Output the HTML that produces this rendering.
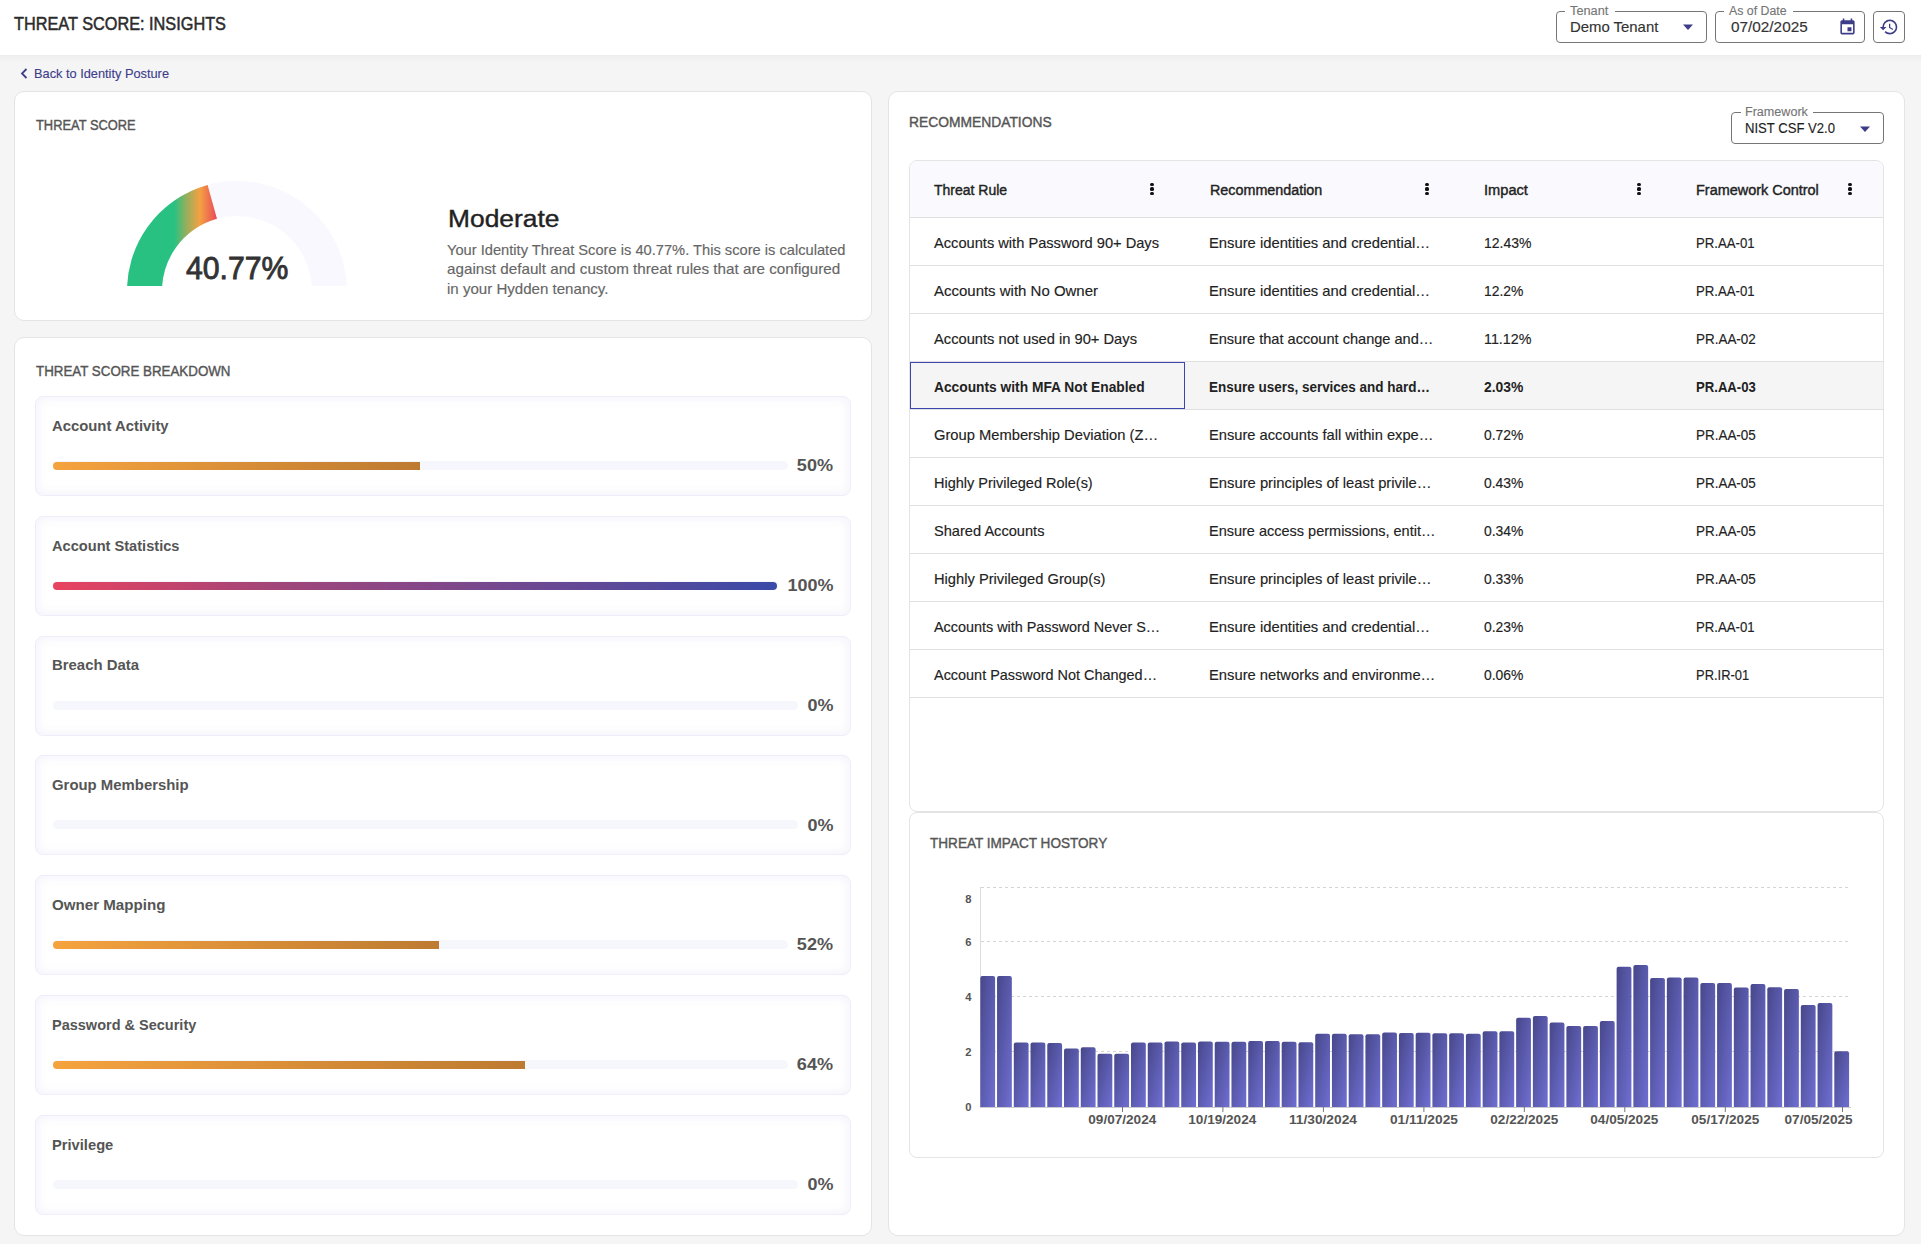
<!DOCTYPE html>
<html><head><meta charset="utf-8"><title>Threat Score: Insights</title>
<style>
html,body{margin:0;padding:0}
body{width:1921px;height:1244px;position:relative;overflow:hidden;background:#f5f5f5;font-family:"Liberation Sans",sans-serif}
.t{position:absolute;white-space:nowrap;display:block}
</style></head><body>
<div style="position:absolute;left:-20px;top:0;width:1961px;height:55px;background:#fff;box-shadow:0 1px 8px rgba(0,0,0,0.06)"></div>
<div style="position:absolute;left:1556px;top:11px;width:151px;height:32px;box-sizing:border-box;border:1px solid #767676;border-radius:4px"></div>
<div style="position:absolute;left:1565px;top:9px;width:50px;height:4px;background:#fff"></div>
<div style="position:absolute;left:1715px;top:11px;width:150px;height:32px;box-sizing:border-box;border:1px solid #767676;border-radius:4px"></div>
<div style="position:absolute;left:1724px;top:9px;width:69px;height:4px;background:#fff"></div>
<div style="position:absolute;left:1873px;top:11px;width:32px;height:32px;box-sizing:border-box;border:1px solid #767676;border-radius:4px"></div>
<svg style="position:absolute;left:1682px;top:23px" width="12" height="8"><path d="M1 1.5 L11 1.5 L6 7 Z" fill="#3c3c89"/></svg>
<svg style="position:absolute;left:1838px;top:16.5px" width="19" height="19" viewBox="0 0 24 24"><path fill="#3c3c89" d="M19 4h-1V2h-2v2H8V2H6v2H5c-1.11 0-1.99.9-1.99 2L3 20a2 2 0 002 2h14c1.1 0 2-.9 2-2V6c0-1.1-.9-2-2-2zm0 16H5V9h14v11zM12 13h5v5h-5z"/></svg>
<svg style="position:absolute;left:1879px;top:17px" width="20" height="20" viewBox="0 0 24 24"><path fill="#3c3c89" d="M13 3a9 9 0 00-9 9H1l3.89 3.89.07.14L9 12H6c0-3.87 3.13-7 7-7s7 3.13 7 7-3.13 7-7 7c-1.93 0-3.68-.79-4.94-2.06l-1.42 1.42A8.954 8.954 0 0013 21a9 9 0 000-18zm-1 5v5l4.28 2.54.72-1.21-3.5-2.08V8H12z"/></svg>
<svg style="position:absolute;left:19px;top:67px" width="10" height="13"><path d="M7.5 2 L3 6.5 L7.5 11" stroke="#3e3e8c" stroke-width="1.8" fill="none"/></svg>
<div style="position:absolute;left:14px;top:91px;width:858px;height:230px;box-sizing:border-box;background:#fff;border:1px solid #e4e4e4;border-radius:10px"></div>
<div style="position:absolute;left:14px;top:337px;width:858px;height:899px;box-sizing:border-box;background:#fff;border:1px solid #e4e4e4;border-radius:10px"></div>
<div style="position:absolute;left:888px;top:91px;width:1017px;height:1145px;box-sizing:border-box;background:#fff;border:1px solid #e4e4e4;border-radius:10px"></div>
<svg style="position:absolute;left:0;top:0" width="872" height="321">
<defs><linearGradient id="gg" gradientUnits="userSpaceOnUse" x1="127" y1="0" x2="218" y2="0">
<stop offset="0.52" stop-color="#29c181"/><stop offset="0.66" stop-color="#9aae5c"/><stop offset="0.80" stop-color="#f4a142"/><stop offset="1" stop-color="#e8435c"/></linearGradient>
<clipPath id="gc"><rect x="0" y="0" width="872" height="286"/></clipPath></defs>
<g clip-path="url(#gc)">
<path d="M127.42 300.59 A110 110 0 1 1 346.58 300.59 L311.71 297.54 A75 75 0 1 0 162.29 297.54 Z" fill="#f8f8fe"/>
<path d="M127.15 296.76 A110 110 0 0 1 207.60 185.00 L216.96 218.73 A75 75 0 0 0 162.10 294.93 Z" fill="url(#gg)"/>
</g></svg>
<div style="position:absolute;left:35px;top:396.00px;width:816px;height:100px;box-sizing:border-box;background:#fff;border:1px solid #edeefa;border-radius:8px;box-shadow:inset 0 0 12px rgba(90,90,210,0.09)"></div>
<div style="position:absolute;left:53px;top:461.00px;width:734.9px;height:9px;background:#f6f6fd;border-radius:5px"></div>
<div style="position:absolute;left:53px;top:462.00px;width:367.0px;height:8px;background:linear-gradient(90deg,#f5a33e,#bd7a31);border-radius:4px 0 0 4px"></div>
<div style="position:absolute;left:35px;top:515.80px;width:816px;height:100px;box-sizing:border-box;background:#fff;border:1px solid #edeefa;border-radius:8px;box-shadow:inset 0 0 12px rgba(90,90,210,0.09)"></div>
<div style="position:absolute;left:53px;top:580.80px;width:725.1px;height:9px;background:#f6f6fd;border-radius:5px"></div>
<div style="position:absolute;left:53px;top:581.80px;width:723.5px;height:8px;background:linear-gradient(90deg,#e9435f,#a24579 30%,#864787 50%,#3a4aa8);border-radius:4px"></div>
<div style="position:absolute;left:35px;top:635.60px;width:816px;height:100px;box-sizing:border-box;background:#fff;border:1px solid #edeefa;border-radius:8px;box-shadow:inset 0 0 12px rgba(90,90,210,0.09)"></div>
<div style="position:absolute;left:53px;top:700.60px;width:745px;height:9px;background:#f6f6fd;border-radius:5px"></div>
<div style="position:absolute;left:35px;top:755.40px;width:816px;height:100px;box-sizing:border-box;background:#fff;border:1px solid #edeefa;border-radius:8px;box-shadow:inset 0 0 12px rgba(90,90,210,0.09)"></div>
<div style="position:absolute;left:53px;top:820.40px;width:745px;height:9px;background:#f6f6fd;border-radius:5px"></div>
<div style="position:absolute;left:35px;top:875.20px;width:816px;height:100px;box-sizing:border-box;background:#fff;border:1px solid #edeefa;border-radius:8px;box-shadow:inset 0 0 12px rgba(90,90,210,0.09)"></div>
<div style="position:absolute;left:53px;top:940.20px;width:735px;height:9px;background:#f6f6fd;border-radius:5px"></div>
<div style="position:absolute;left:53px;top:941.20px;width:386.0px;height:8px;background:linear-gradient(90deg,#f5a33e,#bd7a31);border-radius:4px 0 0 4px"></div>
<div style="position:absolute;left:35px;top:995.00px;width:816px;height:100px;box-sizing:border-box;background:#fff;border:1px solid #edeefa;border-radius:8px;box-shadow:inset 0 0 12px rgba(90,90,210,0.09)"></div>
<div style="position:absolute;left:53px;top:1060.00px;width:735px;height:9px;background:#f6f6fd;border-radius:5px"></div>
<div style="position:absolute;left:53px;top:1061.00px;width:472.0px;height:8px;background:linear-gradient(90deg,#f5a33e,#bd7a31);border-radius:4px 0 0 4px"></div>
<div style="position:absolute;left:35px;top:1114.80px;width:816px;height:100px;box-sizing:border-box;background:#fff;border:1px solid #edeefa;border-radius:8px;box-shadow:inset 0 0 12px rgba(90,90,210,0.09)"></div>
<div style="position:absolute;left:53px;top:1179.80px;width:745px;height:9px;background:#f6f6fd;border-radius:5px"></div>
<div style="position:absolute;left:1731px;top:112px;width:153px;height:32px;box-sizing:border-box;border:1px solid #767676;border-radius:4px"></div>
<div style="position:absolute;left:1741px;top:110px;width:72px;height:4px;background:#fff"></div>
<svg style="position:absolute;left:1859px;top:125px" width="12" height="8"><path d="M1 1.5 L11 1.5 L6 7 Z" fill="#3c3c89"/></svg>
<div style="position:absolute;left:909px;top:160px;width:975px;height:652px;box-sizing:border-box;border:1px solid #e4e4e4;border-radius:8px;background:#fff;overflow:hidden"><div style="position:absolute;left:0;top:0;width:100%;height:56px;background:#fafafe;border-bottom:1px solid #e0e0e0"></div></div>
<div style="position:absolute;left:910px;top:265px;width:973px;height:1px;background:#e0e0e0"></div>
<div style="position:absolute;left:910px;top:313px;width:973px;height:1px;background:#e0e0e0"></div>
<div style="position:absolute;left:910px;top:361px;width:973px;height:1px;background:#e0e0e0"></div>
<div style="position:absolute;left:910px;top:409px;width:973px;height:1px;background:#e0e0e0"></div>
<div style="position:absolute;left:910px;top:457px;width:973px;height:1px;background:#e0e0e0"></div>
<div style="position:absolute;left:910px;top:505px;width:973px;height:1px;background:#e0e0e0"></div>
<div style="position:absolute;left:910px;top:553px;width:973px;height:1px;background:#e0e0e0"></div>
<div style="position:absolute;left:910px;top:601px;width:973px;height:1px;background:#e0e0e0"></div>
<div style="position:absolute;left:910px;top:649px;width:973px;height:1px;background:#e0e0e0"></div>
<div style="position:absolute;left:910px;top:697px;width:973px;height:1px;background:#e0e0e0"></div>
<div style="position:absolute;left:910px;top:362px;width:973px;height:47px;background:#f5f5f5"></div>
<div style="position:absolute;left:910px;top:362px;width:275px;height:47px;box-sizing:border-box;border:1px solid #3b47ae"></div>
<div style="position:absolute;left:1150.4px;top:182.9px;width:3.2px;height:3.2px;border-radius:50%;background:#111"></div>
<div style="position:absolute;left:1150.4px;top:187.4px;width:3.2px;height:3.2px;border-radius:50%;background:#111"></div>
<div style="position:absolute;left:1150.4px;top:191.9px;width:3.2px;height:3.2px;border-radius:50%;background:#111"></div>
<div style="position:absolute;left:1425.4px;top:182.9px;width:3.2px;height:3.2px;border-radius:50%;background:#111"></div>
<div style="position:absolute;left:1425.4px;top:187.4px;width:3.2px;height:3.2px;border-radius:50%;background:#111"></div>
<div style="position:absolute;left:1425.4px;top:191.9px;width:3.2px;height:3.2px;border-radius:50%;background:#111"></div>
<div style="position:absolute;left:1637.4px;top:182.9px;width:3.2px;height:3.2px;border-radius:50%;background:#111"></div>
<div style="position:absolute;left:1637.4px;top:187.4px;width:3.2px;height:3.2px;border-radius:50%;background:#111"></div>
<div style="position:absolute;left:1637.4px;top:191.9px;width:3.2px;height:3.2px;border-radius:50%;background:#111"></div>
<div style="position:absolute;left:1848.4px;top:182.9px;width:3.2px;height:3.2px;border-radius:50%;background:#111"></div>
<div style="position:absolute;left:1848.4px;top:187.4px;width:3.2px;height:3.2px;border-radius:50%;background:#111"></div>
<div style="position:absolute;left:1848.4px;top:191.9px;width:3.2px;height:3.2px;border-radius:50%;background:#111"></div>
<div style="position:absolute;left:909px;top:812px;width:975px;height:346px;box-sizing:border-box;background:#fff;border:1px solid #e4e4e4;border-radius:8px"></div>
<svg style="position:absolute;left:0;top:0" width="1921" height="1244">
<defs><linearGradient id="bg" x1="0" y1="0" x2="1" y2="1"><stop offset="0" stop-color="#47478a"/><stop offset="1" stop-color="#6f6fd3"/></linearGradient></defs>
<line x1="981" y1="887.5" x2="1851" y2="887.5" stroke="#d4d4d4" stroke-width="1" stroke-dasharray="3 3"/>
<line x1="981" y1="941.5" x2="1851" y2="941.5" stroke="#d4d4d4" stroke-width="1" stroke-dasharray="3 3"/>
<line x1="981" y1="996.5" x2="1851" y2="996.5" stroke="#d4d4d4" stroke-width="1" stroke-dasharray="3 3"/>
<line x1="981" y1="1051.5" x2="1851" y2="1051.5" stroke="#d4d4d4" stroke-width="1" stroke-dasharray="3 3"/>
<line x1="980.5" y1="887" x2="980.5" y2="1107" stroke="#dcdcdc" stroke-width="1"/>
<path d="M980.30 1107 V978.10 Q980.30 976.10 982.30 976.10 H993.10 Q995.10 976.10 995.10 978.10 V1107 Z" fill="url(#bg)"/>
<path d="M997.04 1107 V978.10 Q997.04 976.10 999.04 976.10 H1009.84 Q1011.84 976.10 1011.84 978.10 V1107 Z" fill="url(#bg)"/>
<path d="M1013.79 1107 V1044.40 Q1013.79 1042.40 1015.79 1042.40 H1026.59 Q1028.59 1042.40 1028.59 1044.40 V1107 Z" fill="url(#bg)"/>
<path d="M1030.53 1107 V1044.40 Q1030.53 1042.40 1032.53 1042.40 H1043.33 Q1045.33 1042.40 1045.33 1044.40 V1107 Z" fill="url(#bg)"/>
<path d="M1047.28 1107 V1044.90 Q1047.28 1042.90 1049.28 1042.90 H1060.08 Q1062.08 1042.90 1062.08 1044.90 V1107 Z" fill="url(#bg)"/>
<path d="M1064.02 1107 V1050.40 Q1064.02 1048.40 1066.02 1048.40 H1076.82 Q1078.82 1048.40 1078.82 1050.40 V1107 Z" fill="url(#bg)"/>
<path d="M1080.77 1107 V1049.20 Q1080.77 1047.20 1082.77 1047.20 H1093.57 Q1095.57 1047.20 1095.57 1049.20 V1107 Z" fill="url(#bg)"/>
<path d="M1097.51 1107 V1055.70 Q1097.51 1053.70 1099.51 1053.70 H1110.31 Q1112.31 1053.70 1112.31 1055.70 V1107 Z" fill="url(#bg)"/>
<path d="M1114.26 1107 V1055.70 Q1114.26 1053.70 1116.26 1053.70 H1127.06 Q1129.06 1053.70 1129.06 1055.70 V1107 Z" fill="url(#bg)"/>
<path d="M1131.00 1107 V1044.40 Q1131.00 1042.40 1133.00 1042.40 H1143.80 Q1145.80 1042.40 1145.80 1044.40 V1107 Z" fill="url(#bg)"/>
<path d="M1147.75 1107 V1044.40 Q1147.75 1042.40 1149.75 1042.40 H1160.55 Q1162.55 1042.40 1162.55 1044.40 V1107 Z" fill="url(#bg)"/>
<path d="M1164.49 1107 V1043.50 Q1164.49 1041.50 1166.49 1041.50 H1177.29 Q1179.29 1041.50 1179.29 1043.50 V1107 Z" fill="url(#bg)"/>
<path d="M1181.24 1107 V1044.40 Q1181.24 1042.40 1183.24 1042.40 H1194.04 Q1196.04 1042.40 1196.04 1044.40 V1107 Z" fill="url(#bg)"/>
<path d="M1197.98 1107 V1043.50 Q1197.98 1041.50 1199.98 1041.50 H1210.78 Q1212.78 1041.50 1212.78 1043.50 V1107 Z" fill="url(#bg)"/>
<path d="M1214.73 1107 V1043.70 Q1214.73 1041.70 1216.73 1041.70 H1227.53 Q1229.53 1041.70 1229.53 1043.70 V1107 Z" fill="url(#bg)"/>
<path d="M1231.47 1107 V1043.70 Q1231.47 1041.70 1233.47 1041.70 H1244.27 Q1246.27 1041.70 1246.27 1043.70 V1107 Z" fill="url(#bg)"/>
<path d="M1248.22 1107 V1043.00 Q1248.22 1041.00 1250.22 1041.00 H1261.02 Q1263.02 1041.00 1263.02 1043.00 V1107 Z" fill="url(#bg)"/>
<path d="M1264.96 1107 V1043.00 Q1264.96 1041.00 1266.96 1041.00 H1277.76 Q1279.76 1041.00 1279.76 1043.00 V1107 Z" fill="url(#bg)"/>
<path d="M1281.71 1107 V1043.70 Q1281.71 1041.70 1283.71 1041.70 H1294.51 Q1296.51 1041.70 1296.51 1043.70 V1107 Z" fill="url(#bg)"/>
<path d="M1298.45 1107 V1044.20 Q1298.45 1042.20 1300.45 1042.20 H1311.25 Q1313.25 1042.20 1313.25 1044.20 V1107 Z" fill="url(#bg)"/>
<path d="M1315.20 1107 V1035.80 Q1315.20 1033.80 1317.20 1033.80 H1328.00 Q1330.00 1033.80 1330.00 1035.80 V1107 Z" fill="url(#bg)"/>
<path d="M1331.94 1107 V1035.80 Q1331.94 1033.80 1333.94 1033.80 H1344.74 Q1346.74 1033.80 1346.74 1035.80 V1107 Z" fill="url(#bg)"/>
<path d="M1348.69 1107 V1036.30 Q1348.69 1034.30 1350.69 1034.30 H1361.49 Q1363.49 1034.30 1363.49 1036.30 V1107 Z" fill="url(#bg)"/>
<path d="M1365.43 1107 V1036.30 Q1365.43 1034.30 1367.43 1034.30 H1378.23 Q1380.23 1034.30 1380.23 1036.30 V1107 Z" fill="url(#bg)"/>
<path d="M1382.18 1107 V1034.60 Q1382.18 1032.60 1384.18 1032.60 H1394.98 Q1396.98 1032.60 1396.98 1034.60 V1107 Z" fill="url(#bg)"/>
<path d="M1398.92 1107 V1035.10 Q1398.92 1033.10 1400.92 1033.10 H1411.72 Q1413.72 1033.10 1413.72 1035.10 V1107 Z" fill="url(#bg)"/>
<path d="M1415.67 1107 V1034.80 Q1415.67 1032.80 1417.67 1032.80 H1428.47 Q1430.47 1032.80 1430.47 1034.80 V1107 Z" fill="url(#bg)"/>
<path d="M1432.41 1107 V1035.30 Q1432.41 1033.30 1434.41 1033.30 H1445.21 Q1447.21 1033.30 1447.21 1035.30 V1107 Z" fill="url(#bg)"/>
<path d="M1449.16 1107 V1035.30 Q1449.16 1033.30 1451.16 1033.30 H1461.96 Q1463.96 1033.30 1463.96 1035.30 V1107 Z" fill="url(#bg)"/>
<path d="M1465.90 1107 V1035.80 Q1465.90 1033.80 1467.90 1033.80 H1478.70 Q1480.70 1033.80 1480.70 1035.80 V1107 Z" fill="url(#bg)"/>
<path d="M1482.65 1107 V1033.20 Q1482.65 1031.20 1484.65 1031.20 H1495.45 Q1497.45 1031.20 1497.45 1033.20 V1107 Z" fill="url(#bg)"/>
<path d="M1499.39 1107 V1033.20 Q1499.39 1031.20 1501.39 1031.20 H1512.19 Q1514.19 1031.20 1514.19 1033.20 V1107 Z" fill="url(#bg)"/>
<path d="M1516.14 1107 V1019.70 Q1516.14 1017.70 1518.14 1017.70 H1528.94 Q1530.94 1017.70 1530.94 1019.70 V1107 Z" fill="url(#bg)"/>
<path d="M1532.88 1107 V1018.10 Q1532.88 1016.10 1534.88 1016.10 H1545.68 Q1547.68 1016.10 1547.68 1018.10 V1107 Z" fill="url(#bg)"/>
<path d="M1549.63 1107 V1024.50 Q1549.63 1022.50 1551.63 1022.50 H1562.43 Q1564.43 1022.50 1564.43 1024.50 V1107 Z" fill="url(#bg)"/>
<path d="M1566.38 1107 V1027.90 Q1566.38 1025.90 1568.38 1025.90 H1579.17 Q1581.17 1025.90 1581.17 1027.90 V1107 Z" fill="url(#bg)"/>
<path d="M1583.12 1107 V1028.10 Q1583.12 1026.10 1585.12 1026.10 H1595.92 Q1597.92 1026.10 1597.92 1028.10 V1107 Z" fill="url(#bg)"/>
<path d="M1599.87 1107 V1023.10 Q1599.87 1021.10 1601.87 1021.10 H1612.66 Q1614.66 1021.10 1614.66 1023.10 V1107 Z" fill="url(#bg)"/>
<path d="M1616.61 1107 V968.70 Q1616.61 966.70 1618.61 966.70 H1629.41 Q1631.41 966.70 1631.41 968.70 V1107 Z" fill="url(#bg)"/>
<path d="M1633.36 1107 V967.10 Q1633.36 965.10 1635.36 965.10 H1646.15 Q1648.15 965.10 1648.15 967.10 V1107 Z" fill="url(#bg)"/>
<path d="M1650.10 1107 V980.00 Q1650.10 978.00 1652.10 978.00 H1662.90 Q1664.90 978.00 1664.90 980.00 V1107 Z" fill="url(#bg)"/>
<path d="M1666.85 1107 V979.50 Q1666.85 977.50 1668.85 977.50 H1679.64 Q1681.64 977.50 1681.64 979.50 V1107 Z" fill="url(#bg)"/>
<path d="M1683.59 1107 V979.50 Q1683.59 977.50 1685.59 977.50 H1696.39 Q1698.39 977.50 1698.39 979.50 V1107 Z" fill="url(#bg)"/>
<path d="M1700.34 1107 V985.00 Q1700.34 983.00 1702.34 983.00 H1713.13 Q1715.13 983.00 1715.13 985.00 V1107 Z" fill="url(#bg)"/>
<path d="M1717.08 1107 V985.00 Q1717.08 983.00 1719.08 983.00 H1729.88 Q1731.88 983.00 1731.88 985.00 V1107 Z" fill="url(#bg)"/>
<path d="M1733.83 1107 V989.60 Q1733.83 987.60 1735.83 987.60 H1746.62 Q1748.62 987.60 1748.62 989.60 V1107 Z" fill="url(#bg)"/>
<path d="M1750.57 1107 V986.00 Q1750.57 984.00 1752.57 984.00 H1763.37 Q1765.37 984.00 1765.37 986.00 V1107 Z" fill="url(#bg)"/>
<path d="M1767.32 1107 V989.30 Q1767.32 987.30 1769.32 987.30 H1780.12 Q1782.12 987.30 1782.12 989.30 V1107 Z" fill="url(#bg)"/>
<path d="M1784.06 1107 V991.00 Q1784.06 989.00 1786.06 989.00 H1796.86 Q1798.86 989.00 1798.86 991.00 V1107 Z" fill="url(#bg)"/>
<path d="M1800.80 1107 V1007.10 Q1800.80 1005.10 1802.80 1005.10 H1813.60 Q1815.60 1005.10 1815.60 1007.10 V1107 Z" fill="url(#bg)"/>
<path d="M1817.55 1107 V1005.10 Q1817.55 1003.10 1819.55 1003.10 H1830.35 Q1832.35 1003.10 1832.35 1005.10 V1107 Z" fill="url(#bg)"/>
<path d="M1834.30 1107 V1053.30 Q1834.30 1051.30 1836.30 1051.30 H1847.10 Q1849.10 1051.30 1849.10 1053.30 V1107 Z" fill="url(#bg)"/>
<line x1="980" y1="1107.5" x2="1851" y2="1107.5" stroke="#cccccc" stroke-width="1"/>
<line x1="1122.5" y1="1107" x2="1122.5" y2="1112" stroke="#777" stroke-width="1"/>
<line x1="1222.9" y1="1107" x2="1222.9" y2="1112" stroke="#777" stroke-width="1"/>
<line x1="1323.4" y1="1107" x2="1323.4" y2="1112" stroke="#777" stroke-width="1"/>
<line x1="1423.9" y1="1107" x2="1423.9" y2="1112" stroke="#777" stroke-width="1"/>
<line x1="1524.3" y1="1107" x2="1524.3" y2="1112" stroke="#777" stroke-width="1"/>
<line x1="1624.8" y1="1107" x2="1624.8" y2="1112" stroke="#777" stroke-width="1"/>
<line x1="1725.3" y1="1107" x2="1725.3" y2="1112" stroke="#777" stroke-width="1"/>
<line x1="1842.5" y1="1107" x2="1842.5" y2="1112" stroke="#777" stroke-width="1"/>
</svg>
<span class="t" style="left:14.40px;top:14.76px;font-size:18px;line-height:18px;color:#2b2b2b;-webkit-text-stroke:0.50px #2b2b2b;transform:scaleX(0.9045);transform-origin:0 0;">THREAT SCORE: INSIGHTS</span>
<span class="t" style="left:1570.00px;top:4.74px;font-size:12px;line-height:12px;color:#757575;-webkit-text-stroke:0.12px #757575;transform:scaleX(1.0630);transform-origin:0 0;">Tenant</span>
<span class="t" style="left:1570.30px;top:19.40px;font-size:15px;line-height:15px;color:#333;-webkit-text-stroke:0.15px #333;transform:scaleX(0.9927);transform-origin:0 0;">Demo Tenant</span>
<span class="t" style="left:1729.40px;top:4.74px;font-size:12px;line-height:12px;color:#757575;-webkit-text-stroke:0.12px #757575;transform:scaleX(1.0262);transform-origin:0 0;">As of Date</span>
<span class="t" style="left:1731.40px;top:19.40px;font-size:15px;line-height:15px;color:#333;-webkit-text-stroke:0.15px #333;transform:scaleX(1.0216);transform-origin:0 0;">07/02/2025</span>
<span class="t" style="left:34.20px;top:66.77px;font-size:13.5px;line-height:13.5px;color:#3e3e8c;-webkit-text-stroke:0.14px #3e3e8c;transform:scaleX(0.9468);transform-origin:0 0;">Back to Identity Posture</span>
<span class="t" style="left:35.50px;top:116.70px;font-size:15px;line-height:15px;color:#555;-webkit-text-stroke:0.42px #555;transform:scaleX(0.8584);transform-origin:0 0;">THREAT SCORE</span>
<span class="t" style="left:185.60px;top:253.16px;font-size:31px;line-height:31px;color:#333;-webkit-text-stroke:0.87px #333;transform:scaleX(0.9739);transform-origin:0 0;">40.77%</span>
<span class="t" style="left:447.50px;top:208.01px;font-size:23.5px;line-height:23.5px;color:#222;-webkit-text-stroke:0.38px #222;transform:scaleX(1.1221);transform-origin:0 0;">Moderate</span>
<span class="t" style="left:447.00px;top:242.73px;font-size:14.5px;line-height:14.5px;color:#666;-webkit-text-stroke:0.14px #666;transform:scaleX(1.0118);transform-origin:0 0;">Your Identity Threat Score is 40.77%. This score is calculated</span>
<span class="t" style="left:447.00px;top:262.33px;font-size:14.5px;line-height:14.5px;color:#666;-webkit-text-stroke:0.14px #666;transform:scaleX(1.0491);transform-origin:0 0;">against default and custom threat rules that are configured</span>
<span class="t" style="left:447.00px;top:282.23px;font-size:14.5px;line-height:14.5px;color:#666;-webkit-text-stroke:0.14px #666;transform:scaleX(1.0393);transform-origin:0 0;">in your Hydden tenancy.</span>
<span class="t" style="left:35.50px;top:363.00px;font-size:15px;line-height:15px;color:#555;-webkit-text-stroke:0.42px #555;transform:scaleX(0.8896);transform-origin:0 0;">THREAT SCORE BREAKDOWN</span>
<span class="t" style="left:52.00px;top:417.70px;font-size:15px;line-height:15px;color:#555;font-weight:700;transform:scaleX(0.9898);transform-origin:0 0;">Account Activity</span>
<span class="t" style="left:799.07px;top:457.21px;font-size:17px;line-height:17px;color:#555;font-weight:700;transform:scaleX(1.0637);transform-origin:100% 0;">50%</span>
<span class="t" style="left:52.00px;top:537.50px;font-size:15px;line-height:15px;color:#555;font-weight:700;transform:scaleX(0.9742);transform-origin:0 0;">Account Statistics</span>
<span class="t" style="left:789.62px;top:577.01px;font-size:17px;line-height:17px;color:#555;font-weight:700;transform:scaleX(1.0579);transform-origin:100% 0;">100%</span>
<span class="t" style="left:52.00px;top:657.30px;font-size:15px;line-height:15px;color:#555;font-weight:700;transform:scaleX(0.9938);transform-origin:0 0;">Breach Data</span>
<span class="t" style="left:808.52px;top:696.81px;font-size:17px;line-height:17px;color:#555;font-weight:700;transform:scaleX(1.0579);transform-origin:100% 0;">0%</span>
<span class="t" style="left:52.00px;top:777.10px;font-size:15px;line-height:15px;color:#555;font-weight:700;transform:scaleX(0.9933);transform-origin:0 0;">Group Membership</span>
<span class="t" style="left:808.52px;top:816.61px;font-size:17px;line-height:17px;color:#555;font-weight:700;transform:scaleX(1.0579);transform-origin:100% 0;">0%</span>
<span class="t" style="left:52.00px;top:896.90px;font-size:15px;line-height:15px;color:#555;font-weight:700;transform:scaleX(1.0080);transform-origin:0 0;">Owner Mapping</span>
<span class="t" style="left:799.07px;top:936.41px;font-size:17px;line-height:17px;color:#555;font-weight:700;transform:scaleX(1.0637);transform-origin:100% 0;">52%</span>
<span class="t" style="left:52.00px;top:1016.70px;font-size:15px;line-height:15px;color:#555;font-weight:700;transform:scaleX(0.9669);transform-origin:0 0;">Password &amp; Security</span>
<span class="t" style="left:799.07px;top:1056.21px;font-size:17px;line-height:17px;color:#555;font-weight:700;transform:scaleX(1.0637);transform-origin:100% 0;">64%</span>
<span class="t" style="left:52.00px;top:1136.50px;font-size:15px;line-height:15px;color:#555;font-weight:700;transform:scaleX(0.9801);transform-origin:0 0;">Privilege</span>
<span class="t" style="left:808.52px;top:1176.01px;font-size:17px;line-height:17px;color:#555;font-weight:700;transform:scaleX(1.0579);transform-origin:100% 0;">0%</span>
<span class="t" style="left:909.20px;top:114.10px;font-size:15px;line-height:15px;color:#555;-webkit-text-stroke:0.42px #555;transform:scaleX(0.9222);transform-origin:0 0;">RECOMMENDATIONS</span>
<span class="t" style="left:1745.30px;top:106.44px;font-size:12px;line-height:12px;color:#757575;-webkit-text-stroke:0.12px #757575;transform:scaleX(1.0481);transform-origin:0 0;">Framework</span>
<span class="t" style="left:1745.30px;top:119.90px;font-size:15px;line-height:15px;color:#1e1e1e;-webkit-text-stroke:0.15px #1e1e1e;transform:scaleX(0.8730);transform-origin:0 0;">NIST CSF V2.0</span>
<span class="t" style="left:934.10px;top:182.65px;font-size:14px;line-height:14px;color:#222;-webkit-text-stroke:0.39px #222;transform:scaleX(0.9992);transform-origin:0 0;">Threat Rule</span>
<span class="t" style="left:1209.50px;top:182.65px;font-size:14px;line-height:14px;color:#222;-webkit-text-stroke:0.39px #222;transform:scaleX(1.0234);transform-origin:0 0;">Recommendation</span>
<span class="t" style="left:1484.10px;top:182.65px;font-size:14px;line-height:14px;color:#222;-webkit-text-stroke:0.39px #222;transform:scaleX(1.0448);transform-origin:0 0;">Impact</span>
<span class="t" style="left:1696.20px;top:182.65px;font-size:14px;line-height:14px;color:#222;-webkit-text-stroke:0.39px #222;transform:scaleX(1.0317);transform-origin:0 0;">Framework Control</span>
<span class="t" style="left:934.10px;top:236.13px;font-size:14.5px;line-height:14.5px;color:#222;-webkit-text-stroke:0.14px #222;transform:scaleX(1.0097);transform-origin:0 0;">Accounts with Password 90+ Days</span>
<span class="t" style="left:1208.70px;top:236.13px;font-size:14.5px;line-height:14.5px;color:#222;-webkit-text-stroke:0.14px #222;transform:scaleX(1.0192);transform-origin:0 0;">Ensure identities and credential…</span>
<span class="t" style="left:1484.10px;top:236.13px;font-size:14.5px;line-height:14.5px;color:#222;-webkit-text-stroke:0.14px #222;transform:scaleX(0.9657);transform-origin:0 0;">12.43%</span>
<span class="t" style="left:1696.20px;top:236.13px;font-size:14.5px;line-height:14.5px;color:#222;-webkit-text-stroke:0.14px #222;transform:scaleX(0.9103);transform-origin:0 0;">PR.AA-01</span>
<span class="t" style="left:934.10px;top:284.13px;font-size:14.5px;line-height:14.5px;color:#222;-webkit-text-stroke:0.14px #222;transform:scaleX(1.0330);transform-origin:0 0;">Accounts with No Owner</span>
<span class="t" style="left:1208.70px;top:284.13px;font-size:14.5px;line-height:14.5px;color:#222;-webkit-text-stroke:0.14px #222;transform:scaleX(1.0192);transform-origin:0 0;">Ensure identities and credential…</span>
<span class="t" style="left:1484.10px;top:284.13px;font-size:14.5px;line-height:14.5px;color:#222;-webkit-text-stroke:0.14px #222;transform:scaleX(0.9581);transform-origin:0 0;">12.2%</span>
<span class="t" style="left:1696.20px;top:284.13px;font-size:14.5px;line-height:14.5px;color:#222;-webkit-text-stroke:0.14px #222;transform:scaleX(0.9103);transform-origin:0 0;">PR.AA-01</span>
<span class="t" style="left:934.10px;top:332.13px;font-size:14.5px;line-height:14.5px;color:#222;-webkit-text-stroke:0.14px #222;transform:scaleX(1.0134);transform-origin:0 0;">Accounts not used in 90+ Days</span>
<span class="t" style="left:1208.70px;top:332.13px;font-size:14.5px;line-height:14.5px;color:#222;-webkit-text-stroke:0.14px #222;transform:scaleX(1.0049);transform-origin:0 0;">Ensure that account change and…</span>
<span class="t" style="left:1484.10px;top:332.13px;font-size:14.5px;line-height:14.5px;color:#222;-webkit-text-stroke:0.14px #222;transform:scaleX(0.9873);transform-origin:0 0;">11.12%</span>
<span class="t" style="left:1696.20px;top:332.13px;font-size:14.5px;line-height:14.5px;color:#222;-webkit-text-stroke:0.14px #222;transform:scaleX(0.9274);transform-origin:0 0;">PR.AA-02</span>
<span class="t" style="left:934.10px;top:380.13px;font-size:14.5px;line-height:14.5px;color:#222;font-weight:700;transform:scaleX(0.9499);transform-origin:0 0;">Accounts with MFA Not Enabled</span>
<span class="t" style="left:1208.70px;top:380.13px;font-size:14.5px;line-height:14.5px;color:#222;font-weight:700;transform:scaleX(0.9295);transform-origin:0 0;">Ensure users, services and hard…</span>
<span class="t" style="left:1484.10px;top:380.13px;font-size:14.5px;line-height:14.5px;color:#222;font-weight:700;transform:scaleX(0.9581);transform-origin:0 0;">2.03%</span>
<span class="t" style="left:1696.20px;top:380.13px;font-size:14.5px;line-height:14.5px;color:#222;font-weight:700;transform:scaleX(0.9050);transform-origin:0 0;">PR.AA-03</span>
<span class="t" style="left:934.10px;top:428.13px;font-size:14.5px;line-height:14.5px;color:#222;-webkit-text-stroke:0.14px #222;transform:scaleX(1.0153);transform-origin:0 0;">Group Membership Deviation (Z…</span>
<span class="t" style="left:1208.70px;top:428.13px;font-size:14.5px;line-height:14.5px;color:#222;-webkit-text-stroke:0.14px #222;transform:scaleX(1.0124);transform-origin:0 0;">Ensure accounts fall within expe…</span>
<span class="t" style="left:1484.10px;top:428.13px;font-size:14.5px;line-height:14.5px;color:#222;-webkit-text-stroke:0.14px #222;transform:scaleX(0.9581);transform-origin:0 0;">0.72%</span>
<span class="t" style="left:1696.20px;top:428.13px;font-size:14.5px;line-height:14.5px;color:#222;-webkit-text-stroke:0.14px #222;transform:scaleX(0.9274);transform-origin:0 0;">PR.AA-05</span>
<span class="t" style="left:934.10px;top:476.13px;font-size:14.5px;line-height:14.5px;color:#222;-webkit-text-stroke:0.14px #222;transform:scaleX(0.9997);transform-origin:0 0;">Highly Privileged Role(s)</span>
<span class="t" style="left:1208.70px;top:476.13px;font-size:14.5px;line-height:14.5px;color:#222;-webkit-text-stroke:0.14px #222;transform:scaleX(1.0187);transform-origin:0 0;">Ensure principles of least privile…</span>
<span class="t" style="left:1484.10px;top:476.13px;font-size:14.5px;line-height:14.5px;color:#222;-webkit-text-stroke:0.14px #222;transform:scaleX(0.9581);transform-origin:0 0;">0.43%</span>
<span class="t" style="left:1696.20px;top:476.13px;font-size:14.5px;line-height:14.5px;color:#222;-webkit-text-stroke:0.14px #222;transform:scaleX(0.9274);transform-origin:0 0;">PR.AA-05</span>
<span class="t" style="left:934.10px;top:524.13px;font-size:14.5px;line-height:14.5px;color:#222;-webkit-text-stroke:0.14px #222;transform:scaleX(1.0078);transform-origin:0 0;">Shared Accounts</span>
<span class="t" style="left:1208.70px;top:524.13px;font-size:14.5px;line-height:14.5px;color:#222;-webkit-text-stroke:0.14px #222;transform:scaleX(0.9998);transform-origin:0 0;">Ensure access permissions, entit…</span>
<span class="t" style="left:1484.10px;top:524.13px;font-size:14.5px;line-height:14.5px;color:#222;-webkit-text-stroke:0.14px #222;transform:scaleX(0.9581);transform-origin:0 0;">0.34%</span>
<span class="t" style="left:1696.20px;top:524.13px;font-size:14.5px;line-height:14.5px;color:#222;-webkit-text-stroke:0.14px #222;transform:scaleX(0.9274);transform-origin:0 0;">PR.AA-05</span>
<span class="t" style="left:934.10px;top:572.13px;font-size:14.5px;line-height:14.5px;color:#222;-webkit-text-stroke:0.14px #222;transform:scaleX(1.0128);transform-origin:0 0;">Highly Privileged Group(s)</span>
<span class="t" style="left:1208.70px;top:572.13px;font-size:14.5px;line-height:14.5px;color:#222;-webkit-text-stroke:0.14px #222;transform:scaleX(1.0187);transform-origin:0 0;">Ensure principles of least privile…</span>
<span class="t" style="left:1484.10px;top:572.13px;font-size:14.5px;line-height:14.5px;color:#222;-webkit-text-stroke:0.14px #222;transform:scaleX(0.9581);transform-origin:0 0;">0.33%</span>
<span class="t" style="left:1696.20px;top:572.13px;font-size:14.5px;line-height:14.5px;color:#222;-webkit-text-stroke:0.14px #222;transform:scaleX(0.9274);transform-origin:0 0;">PR.AA-05</span>
<span class="t" style="left:934.10px;top:620.13px;font-size:14.5px;line-height:14.5px;color:#222;-webkit-text-stroke:0.14px #222;transform:scaleX(0.9918);transform-origin:0 0;">Accounts with Password Never S…</span>
<span class="t" style="left:1208.70px;top:620.13px;font-size:14.5px;line-height:14.5px;color:#222;-webkit-text-stroke:0.14px #222;transform:scaleX(1.0192);transform-origin:0 0;">Ensure identities and credential…</span>
<span class="t" style="left:1484.10px;top:620.13px;font-size:14.5px;line-height:14.5px;color:#222;-webkit-text-stroke:0.14px #222;transform:scaleX(0.9581);transform-origin:0 0;">0.23%</span>
<span class="t" style="left:1696.20px;top:620.13px;font-size:14.5px;line-height:14.5px;color:#222;-webkit-text-stroke:0.14px #222;transform:scaleX(0.9103);transform-origin:0 0;">PR.AA-01</span>
<span class="t" style="left:934.10px;top:668.13px;font-size:14.5px;line-height:14.5px;color:#222;-webkit-text-stroke:0.14px #222;transform:scaleX(0.9956);transform-origin:0 0;">Account Password Not Changed…</span>
<span class="t" style="left:1208.70px;top:668.13px;font-size:14.5px;line-height:14.5px;color:#222;-webkit-text-stroke:0.14px #222;transform:scaleX(1.0177);transform-origin:0 0;">Ensure networks and environme…</span>
<span class="t" style="left:1484.10px;top:668.13px;font-size:14.5px;line-height:14.5px;color:#222;-webkit-text-stroke:0.14px #222;transform:scaleX(0.9581);transform-origin:0 0;">0.06%</span>
<span class="t" style="left:1696.20px;top:668.13px;font-size:14.5px;line-height:14.5px;color:#222;-webkit-text-stroke:0.14px #222;transform:scaleX(0.8920);transform-origin:0 0;">PR.IR-01</span>
<span class="t" style="left:930.40px;top:836.15px;font-size:14px;line-height:14px;color:#555;-webkit-text-stroke:0.39px #555;transform:scaleX(0.9693);transform-origin:0 0;">THREAT IMPACT HOSTORY</span>
<span class="t" style="left:965.27px;top:893.52px;font-size:11.2px;line-height:11.2px;color:#555;font-weight:700;">8</span>
<span class="t" style="left:965.27px;top:936.52px;font-size:11.2px;line-height:11.2px;color:#555;font-weight:700;">6</span>
<span class="t" style="left:965.27px;top:991.52px;font-size:11.2px;line-height:11.2px;color:#555;font-weight:700;">4</span>
<span class="t" style="left:965.27px;top:1046.52px;font-size:11.2px;line-height:11.2px;color:#555;font-weight:700;">2</span>
<span class="t" style="left:965.27px;top:1101.52px;font-size:11.2px;line-height:11.2px;color:#555;font-weight:700;">0</span>
<span class="t" style="left:1090.98px;top:1113.62px;font-size:12.5px;line-height:12.5px;color:#555;font-weight:700;transform:scaleX(1.0869);transform-origin:50% 0;">09/07/2024</span>
<span class="t" style="left:1191.45px;top:1113.62px;font-size:12.5px;line-height:12.5px;color:#555;font-weight:700;transform:scaleX(1.0869);transform-origin:50% 0;">10/19/2024</span>
<span class="t" style="left:1292.26px;top:1113.62px;font-size:12.5px;line-height:12.5px;color:#555;font-weight:700;transform:scaleX(1.0990);transform-origin:50% 0;">11/30/2024</span>
<span class="t" style="left:1392.73px;top:1113.62px;font-size:12.5px;line-height:12.5px;color:#555;font-weight:700;transform:scaleX(1.0990);transform-origin:50% 0;">01/11/2025</span>
<span class="t" style="left:1492.86px;top:1113.62px;font-size:12.5px;line-height:12.5px;color:#555;font-weight:700;transform:scaleX(1.0869);transform-origin:50% 0;">02/22/2025</span>
<span class="t" style="left:1593.33px;top:1113.62px;font-size:12.5px;line-height:12.5px;color:#555;font-weight:700;transform:scaleX(1.0869);transform-origin:50% 0;">04/05/2025</span>
<span class="t" style="left:1693.80px;top:1113.62px;font-size:12.5px;line-height:12.5px;color:#555;font-weight:700;transform:scaleX(1.0869);transform-origin:50% 0;">05/17/2025</span>
<span class="t" style="left:1790.44px;top:1113.62px;font-size:12.5px;line-height:12.5px;color:#555;font-weight:700;transform:scaleX(1.0869);transform-origin:100% 0;">07/05/2025</span>
</body></html>
